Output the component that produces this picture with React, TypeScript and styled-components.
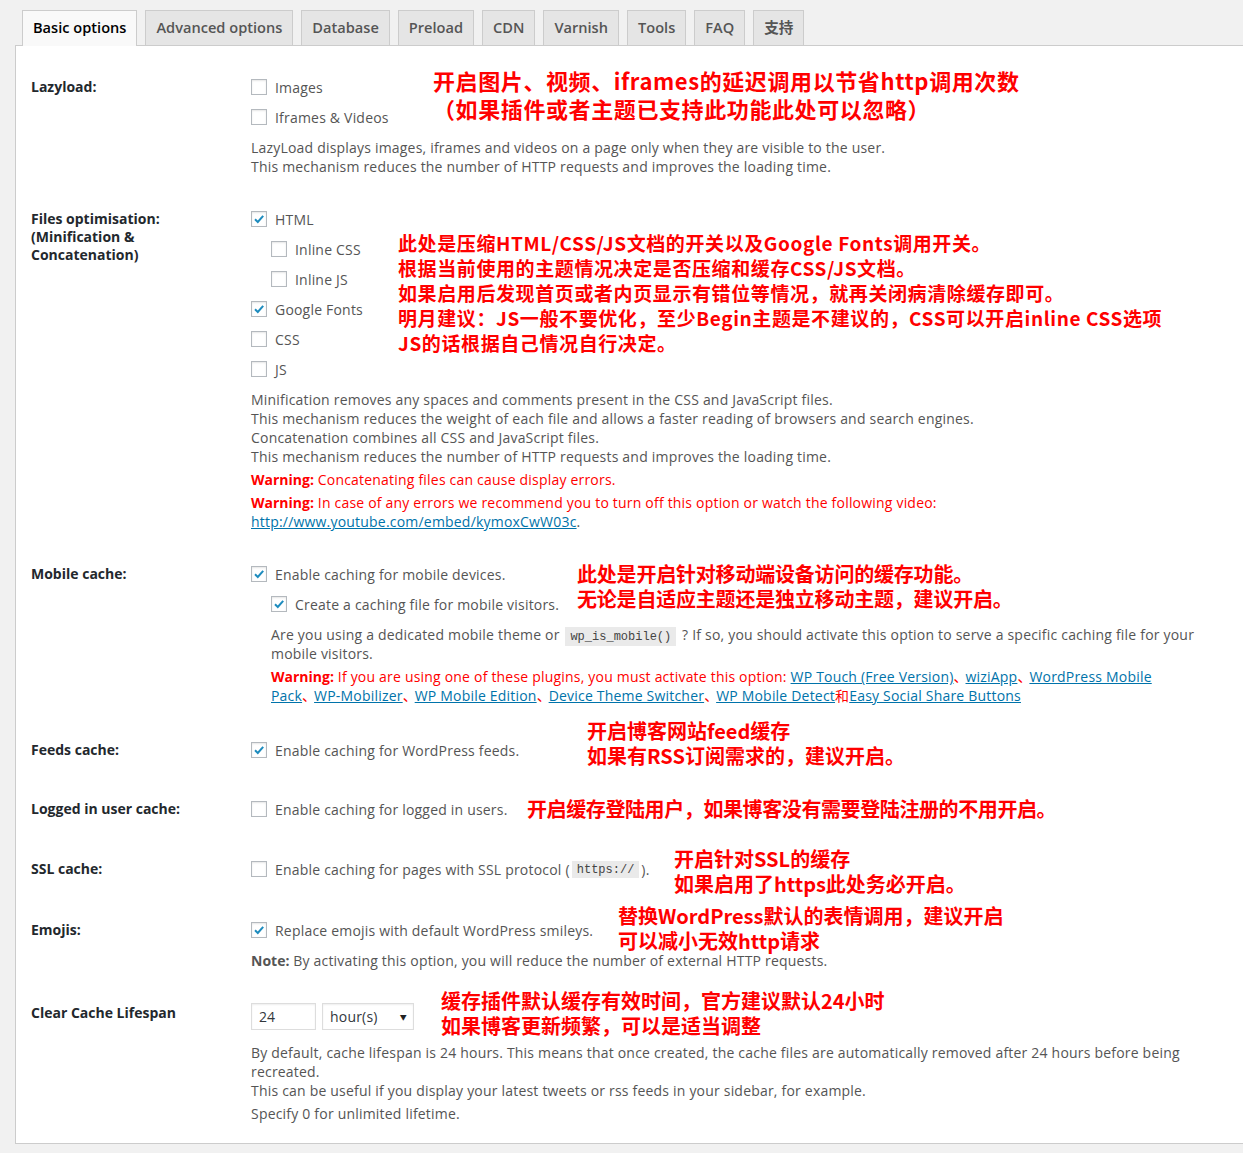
import React from "react";
import styled, { createGlobalStyle } from "styled-components";

const GlobalStyle = createGlobalStyle`
  html, body { margin: 0; padding: 0; background: #f1f1f1; }
  body {
    font-family: "Open Sans", "Noto Sans", "Noto Sans CJK SC", sans-serif;
    font-size: 14px;
    color: #555;
  }
`;

const Page = styled.div`
  padding: 10px 0 0 15px;
  height: 1153px;
  box-sizing: border-box;
  overflow: hidden;
`;

const TabBar = styled.nav`
  display: flex;
  gap: 8px;
  padding-left: 7px;
  position: relative;
  z-index: 1;
`;

const Tab = styled.a<{ $active?: boolean }>`
  display: block;
  height: ${(p) => (p.$active ? 36 : 35)}px;
  margin-bottom: ${(p) => (p.$active ? -1 : 0)}px;
  box-sizing: border-box;
  padding: 0 10px;
  line-height: 33px;
  border: 1px solid #ccc;
  border-bottom: none;
  background: ${(p) => (p.$active ? "#f9f9f9" : "#e5e5e5")};
  color: ${(p) => (p.$active ? "#000" : "#555")};
  font-weight: 600;
  font-size: 14.6px;
  text-decoration: none;
  cursor: pointer;
`;

const Panel = styled.div`
  background: #fff;
  border: 1px solid #ccc;
  border-right: none;
  padding: 0 0 20px 15px;
`;

const Row = styled.div<{ $space: number }>`
  position: relative;
  display: grid;
  grid-template-columns: 220px 952px;
  margin-top: ${(p) => p.$space}px;
`;

const Label = styled.div`
  padding-top: 6px;
  font-weight: 700;
  font-size: 14px;
  line-height: 18px;
  color: #23282d;
`;

const Field = styled.div`
  display: flex;
  flex-direction: column;
  letter-spacing: 0.2px;
`;

const CheckRow = styled.label<{ $indent?: boolean }>`
  display: flex;
  align-items: center;
  height: 30px;
  padding-left: ${(p) => (p.$indent ? 20 : 0)}px;
  line-height: 19px;
  color: #555;
`;

const Box = styled.span`
  width: 16px;
  height: 16px;
  box-sizing: border-box;
  border: 1px solid #b4b9be;
  background: #fff;
  box-shadow: inset 0 1px 2px rgba(0, 0, 0, 0.1);
  margin-right: 8px;
  display: flex;
  align-items: center;
  justify-content: center;
  flex: none;
`;

const Desc = styled.p<{ $indent?: boolean; $gap?: number }>`
  margin: ${(p) => p.$gap ?? 6}px 0 0;
  padding-left: ${(p) => (p.$indent ? 20 : 0)}px;
  line-height: 19px;
  color: #555;
`;

const Warn = styled.p<{ $indent?: boolean; $narrow?: boolean }>`
  margin: 4px 0 0;
  padding-left: ${(p) => (p.$indent ? 20 : 0)}px;
  padding-right: ${(p) => (p.$narrow ? 14 : 0)}px;
  line-height: 19px;
  color: #f00;
`;

const Strong = styled.strong`
  font-weight: 700;
  letter-spacing: 0;
`;

const Link = styled.a`
  color: #0073aa;
  text-decoration: underline;
`;

const Sep = styled.span`
  letter-spacing: -2px;
`;

const Plain = styled.span`
  color: #555;
`;

const Code = styled.code`
  font-family: "Liberation Mono", "DejaVu Sans Mono", monospace;
  font-size: 12px;
  line-height: 1;
  letter-spacing: 0;
  background: #eaeaea;
  padding: 3px 5px 2px;
  margin: 0 2px;
  color: #444;
`;

const InputRow = styled.div`
  display: flex;
  gap: 6px;
  margin-top: 5px;
`;

const NumInput = styled.input`
  width: 65px;
  height: 27px;
  box-sizing: border-box;
  border: 1px solid #ddd;
  box-shadow: inset 0 1px 2px rgba(0, 0, 0, 0.07);
  padding: 3px 7px;
  font-family: inherit;
  font-size: 14px;
  color: #32373c;
  outline: none;
`;

const SelectBox = styled.div`
  width: 92px;
  height: 27px;
  box-sizing: border-box;
  border: 1px solid #ddd;
  box-shadow: inset 0 1px 2px rgba(0, 0, 0, 0.07);
  padding: 0 6px 0 7px;
  display: flex;
  align-items: center;
  justify-content: space-between;
  font-size: 14px;
  color: #32373c;
`;

const Arrow = styled.span`
  font-size: 7px;
  color: #222;
`;

const Note = styled.div<{ $x: number; $y: number; $size: number; $lh: number; $ls: number }>`
  position: absolute;
  left: ${(p) => p.$x}px;
  top: ${(p) => p.$y}px;
  font-family: "Noto Sans CJK SC", "Noto Sans", sans-serif;
  font-weight: 700;
  font-size: ${(p) => p.$size}px;
  line-height: ${(p) => p.$lh}px;
  letter-spacing: ${(p) => p.$ls}px;
  color: #f00;
  white-space: nowrap;
  pointer-events: none;
`;

const NoteLine = styled.div``;

const Check = ({ on }: { on?: boolean }) => (
  <Box>
    {on && (
      <svg width="14" height="14" viewBox="0 0 14 14">
        <path d="M3 7.2 L5.8 10 L11.2 3.8" fill="none" stroke="#1e8cbe" strokeWidth="2" />
      </svg>
    )}
  </Box>
);

const Annotation = ({
  x,
  y,
  size = 20,
  lh = 25,
  ls = 0,
  lines,
}: {
  x: number;
  y: number;
  size?: number;
  lh?: number;
  ls?: number;
  lines: string[];
}) => (
  <Note $x={x} $y={y} $size={size} $lh={lh} $ls={ls}>
    {lines.map((l) => (
      <NoteLine key={l}>{l}</NoteLine>
    ))}
  </Note>
);

const tabs = ["Basic options", "Advanced options", "Database", "Preload", "CDN", "Varnish", "Tools", "FAQ", "支持"];

const mobileLinks = [
  "WP Touch (Free Version)",
  "wiziApp",
  "WordPress Mobile Pack",
  "WP-Mobilizer",
  "WP Mobile Edition",
  "Device Theme Switcher",
];

export default function App() {
  return (
    <Page>
      <GlobalStyle />
      <TabBar>
        {tabs.map((t, i) => (
          <Tab key={t} $active={i === 0}>
            {t}
          </Tab>
        ))}
      </TabBar>
      <Panel>
        <Row $space={26}>
          <Label>Lazyload:</Label>
          <Field>
            <CheckRow>
              <Check />
              Images
            </CheckRow>
            <CheckRow>
              <Check />
              Iframes &amp; Videos
            </CheckRow>
            <Desc>
              LazyLoad displays images, iframes and videos on a page only when they are visible to the user.
              <br />
              This mechanism reduces the number of HTTP requests and improves the loading time.
            </Desc>
          </Field>
          <Annotation
            x={402}
            y={-6}
            size={22}
            lh={28}
            ls={0.6}
            lines={["开启图片、视频、iframes的延迟调用以节省http调用次数", "（如果插件或者主题已支持此功能此处可以忽略）"]}
          />
        </Row>

        <Row $space={28}>
          <Label>
            Files optimisation:
            <br />
            (Minification &amp;
            <br />
            Concatenation)
          </Label>
          <Field>
            <CheckRow>
              <Check on />
              HTML
            </CheckRow>
            <CheckRow $indent>
              <Check />
              Inline CSS
            </CheckRow>
            <CheckRow $indent>
              <Check />
              Inline JS
            </CheckRow>
            <CheckRow>
              <Check on />
              Google Fonts
            </CheckRow>
            <CheckRow>
              <Check />
              CSS
            </CheckRow>
            <CheckRow>
              <Check />
              JS
            </CheckRow>
            <Desc>
              Minification removes any spaces and comments present in the CSS and JavaScript files.
              <br />
              This mechanism reduces the weight of each file and allows a faster reading of browsers and search engines.
              <br />
              Concatenation combines all CSS and JavaScript files.
              <br />
              This mechanism reduces the number of HTTP requests and improves the loading time.
            </Desc>
            <Warn>
              <Strong>Warning:</Strong> Concatenating files can cause display errors.
            </Warn>
            <Warn>
              <Strong>Warning:</Strong> In case of any errors we recommend you to turn off this option or watch the
              following video:
              <br />
              <Link>http://www.youtube.com/embed/kymoxCwW03c</Link>
              <Plain>.</Plain>
            </Warn>
          </Field>
          <Annotation
            x={367}
            y={26}
            size={19}
            lh={25}
            ls={0.6}
            lines={[
              "此处是压缩HTML/CSS/JS文档的开关以及Google Fonts调用开关。",
              "根据当前使用的主题情况决定是否压缩和缓存CSS/JS文档。",
              "如果启用后发现首页或者内页显示有错位等情况，就再关闭病清除缓存即可。",
              "明月建议：JS一般不要优化，至少Begin主题是不建议的，CSS可以开启inline CSS选项",
              "JS的话根据自己情况自行决定。",
            ]}
          />
        </Row>

        <Row $space={28}>
          <Label>Mobile cache:</Label>
          <Field>
            <CheckRow>
              <Check on />
              Enable caching for mobile devices.
            </CheckRow>
            <CheckRow $indent>
              <Check on />
              Create a caching file for mobile visitors.
            </CheckRow>
            <Desc $indent>
              Are you using a dedicated mobile theme or <Code>wp_is_mobile()</Code> ? If so, you should activate this
              option to serve a specific caching file for your mobile visitors.
            </Desc>
            <Warn $indent $narrow>
              <Strong>Warning:</Strong> If you are using one of these plugins, you must activate this option:{" "}
              {mobileLinks.map((l) => (
                <React.Fragment key={l}>
                  <Link>{l}</Link>
                  <Sep>、</Sep>
                </React.Fragment>
              ))}
              <Link>WP Mobile Detect</Link>和<Link>Easy Social Share Buttons</Link>
            </Warn>
          </Field>
          <Annotation
            x={546}
            y={2}
            ls={-0.2}
            lines={["此处是开启针对移动端设备访问的缓存功能。", "无论是自适应主题还是独立移动主题，建议开启。"]}
          />
        </Row>

        <Row $space={30}>
          <Label>Feeds cache:</Label>
          <Field>
            <CheckRow>
              <Check on />
              Enable caching for WordPress feeds.
            </CheckRow>
          </Field>
          <Annotation x={556} y={-17} lines={["开启博客网站feed缓存", "如果有RSS订阅需求的，建议开启。"]} />
        </Row>

        <Row $space={29}>
          <Label>Logged in user cache:</Label>
          <Field>
            <CheckRow>
              <Check />
              Enable caching for logged in users.
            </CheckRow>
          </Field>
          <Annotation x={496} y={2} ls={-0.4} lines={["开启缓存登陆用户，如果博客没有需要登陆注册的不用开启。"]} />
        </Row>

        <Row $space={30}>
          <Label>SSL cache:</Label>
          <Field>
            <CheckRow>
              <Check />
              Enable caching for pages with SSL protocol (<Code>https://</Code>).
            </CheckRow>
          </Field>
          <Annotation x={643} y={-8} lines={["开启针对SSL的缓存", "如果启用了https此处务必开启。"]} />
        </Row>

        <Row $space={31}>
          <Label>Emojis:</Label>
          <Field>
            <CheckRow>
              <Check on />
              Replace emojis with default WordPress smileys.
            </CheckRow>
            <Desc>
              <Strong>Note:</Strong> By activating this option, you will reduce the number of external HTTP requests.
            </Desc>
          </Field>
          <Annotation x={587} y={-12} lines={["替换WordPress默认的表情调用，建议开启", "可以减小无效http请求"]} />
        </Row>

        <Row $space={28}>
          <Label>Clear Cache Lifespan</Label>
          <Field>
            <InputRow>
              <NumInput defaultValue="24" />
              <SelectBox>
                hour(s)
                <Arrow>▼</Arrow>
              </SelectBox>
            </InputRow>
            <Desc $gap={13}>
              By default, cache lifespan is 24 hours. This means that once created, the cache files are automatically
              removed after 24 hours before being recreated.
              <br />
              This can be useful if you display your latest tweets or rss feeds in your sidebar, for example.
            </Desc>
            <Desc $gap={4}>Specify 0 for unlimited lifetime.</Desc>
          </Field>
          <Annotation
            x={410}
            y={-10}
            lines={["缓存插件默认缓存有效时间，官方建议默认24小时", "如果博客更新频繁，可以是适当调整"]}
          />
        </Row>
      </Panel>
    </Page>
  );
}
